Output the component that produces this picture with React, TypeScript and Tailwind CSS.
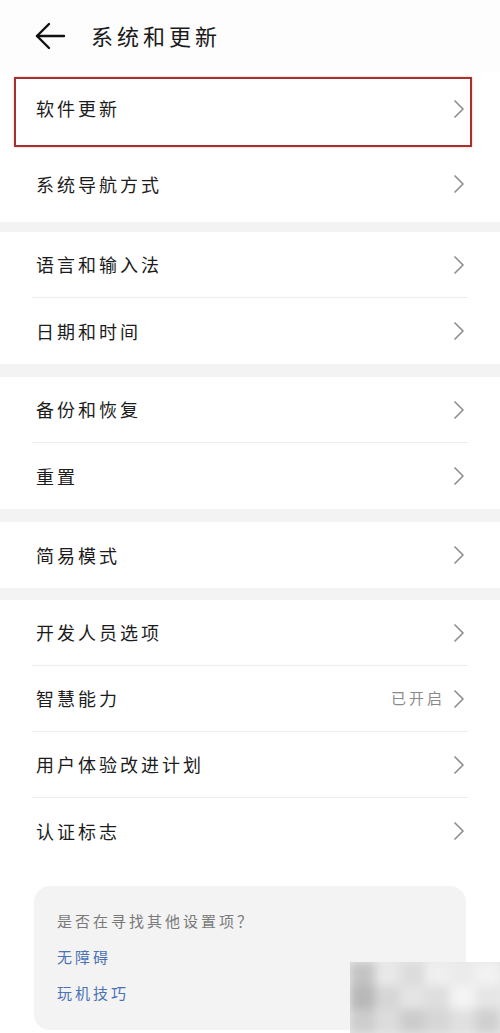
const font = { fontFamily: '"Noto Sans CJK SC", "Noto Sans", sans-serif' };

type Item = { label: string; value?: string; h?: string };

const groups: Item[][] = [
  [
    { label: '软件更新', h: 'h-[74px]' },
    { label: '系统导航方式', h: 'h-[76px]' },
  ],
  [{ label: '语言和输入法' }, { label: '日期和时间' }],
  [{ label: '备份和恢复' }, { label: '重置' }],
  [{ label: '简易模式' }],
  [
    { label: '开发人员选项' },
    { label: '智慧能力', value: '已开启' },
    { label: '用户体验改进计划' },
    { label: '认证标志' },
  ],
];

function Chevron() {
  return (
    <svg width="12" height="20" viewBox="0 0 12 20" fill="none" stroke="#8f8f8f" strokeWidth="1.7" strokeLinecap="round" strokeLinejoin="round">
      <path d="M2 2l8 8-8 8" />
    </svg>
  );
}

function Row({ item, last, highlight }: { item: Item; last: boolean; highlight?: boolean }) {
  return (
    <div className={`relative ${item.h ?? 'h-[66px]'} px-[32px]`}>
      <div className={`flex h-full items-center justify-between ${last ? '' : 'border-b border-[#ececec]'}`}>
        <span className="pl-[4px] text-[18px] tracking-[3px] text-[#1c1c1c]">{item.label}</span>
        <div className="mr-[3px] flex items-center">
          {item.value && <span className="mr-[8px] text-[15px] tracking-[3px] text-[#8a8a8a]">{item.value}</span>}
          <Chevron />
        </div>
      </div>
      {highlight && (
        <div className="pointer-events-none absolute left-[14px] right-[28px] top-[5px] bottom-[-1px] border-2 border-[#a8302f] shadow-[0_0_2px_rgba(200,60,60,0.4)]" />
      )}
    </div>
  );
}

export default function App() {
  return (
    <div className="relative h-[1033px] w-[500px] overflow-hidden bg-[#f3f3f3]" style={font}>
      {/* Header */}
      <div className="flex h-[72px] items-center bg-[#fdfdfd] pl-[34px]">
        <svg width="32" height="30" viewBox="0 0 32 30" fill="none" stroke="#111" strokeWidth="2.4" strokeLinecap="round" strokeLinejoin="round">
          <path d="M30 15H3" />
          <path d="M15 3L3 15l12 12" />
        </svg>
        <span className="ml-[25px] mb-[2px] text-[22px] tracking-[4px] text-[#1a1a1a]">系统和更新</span>
      </div>

      <div className="flex flex-col">
        {groups.map((g, gi) => (
          <div
            key={gi}
            className={`bg-white ${gi === 0 ? '' : gi === 1 ? 'mt-[10px]' : gi === 4 ? 'mt-[12px]' : 'mt-[13px]'}`}
          >
            {g.map((item, i) => (
              <Row key={item.label} item={item} last={i === g.length - 1} highlight={gi === 0 && i === 0} />
            ))}
          </div>
        ))}

        <div className="bg-white px-[34px] pt-[22px] pb-[10px]">
          <div className="flex h-[144px] flex-col rounded-[16px] bg-[#f3f3f3] px-[23px] pt-[24px]">
            <span className="text-[15px] tracking-[3px] text-[#7a7a7a]">是否在寻找其他设置项？</span>
            <span className="mt-[13px] text-[15px] tracking-[3px] text-[#4a72b5]">无障碍</span>
            <span className="mt-[14px] text-[15px] tracking-[3px] text-[#4a72b5]">玩机技巧</span>
          </div>
        </div>
      </div>

      {/* mosaic watermark */}
      <div className="absolute left-[350px] top-[962px] h-[71px] w-[150px] overflow-hidden bg-[#e6e6e6]">
        <div className="grid h-full w-full grid-cols-6 grid-rows-3 blur-[5px]">
          {['#c4c4c4', '#e8e8e8', '#dcdcdc', '#efefef', '#ebebeb', '#f2f2f2',
            '#b8b8b8', '#d6d6d6', '#e4e4e4', '#dedede', '#f4f4f4', '#e6e6e6',
            '#cdcdcd', '#dcdcdc', '#cccccc', '#d6d6d6', '#e0e0e0', '#d0d0d0'].map((c, i) => (
            <div key={i} style={{ backgroundColor: c }} />
          ))}
        </div>
      </div>
    </div>
  );
}
